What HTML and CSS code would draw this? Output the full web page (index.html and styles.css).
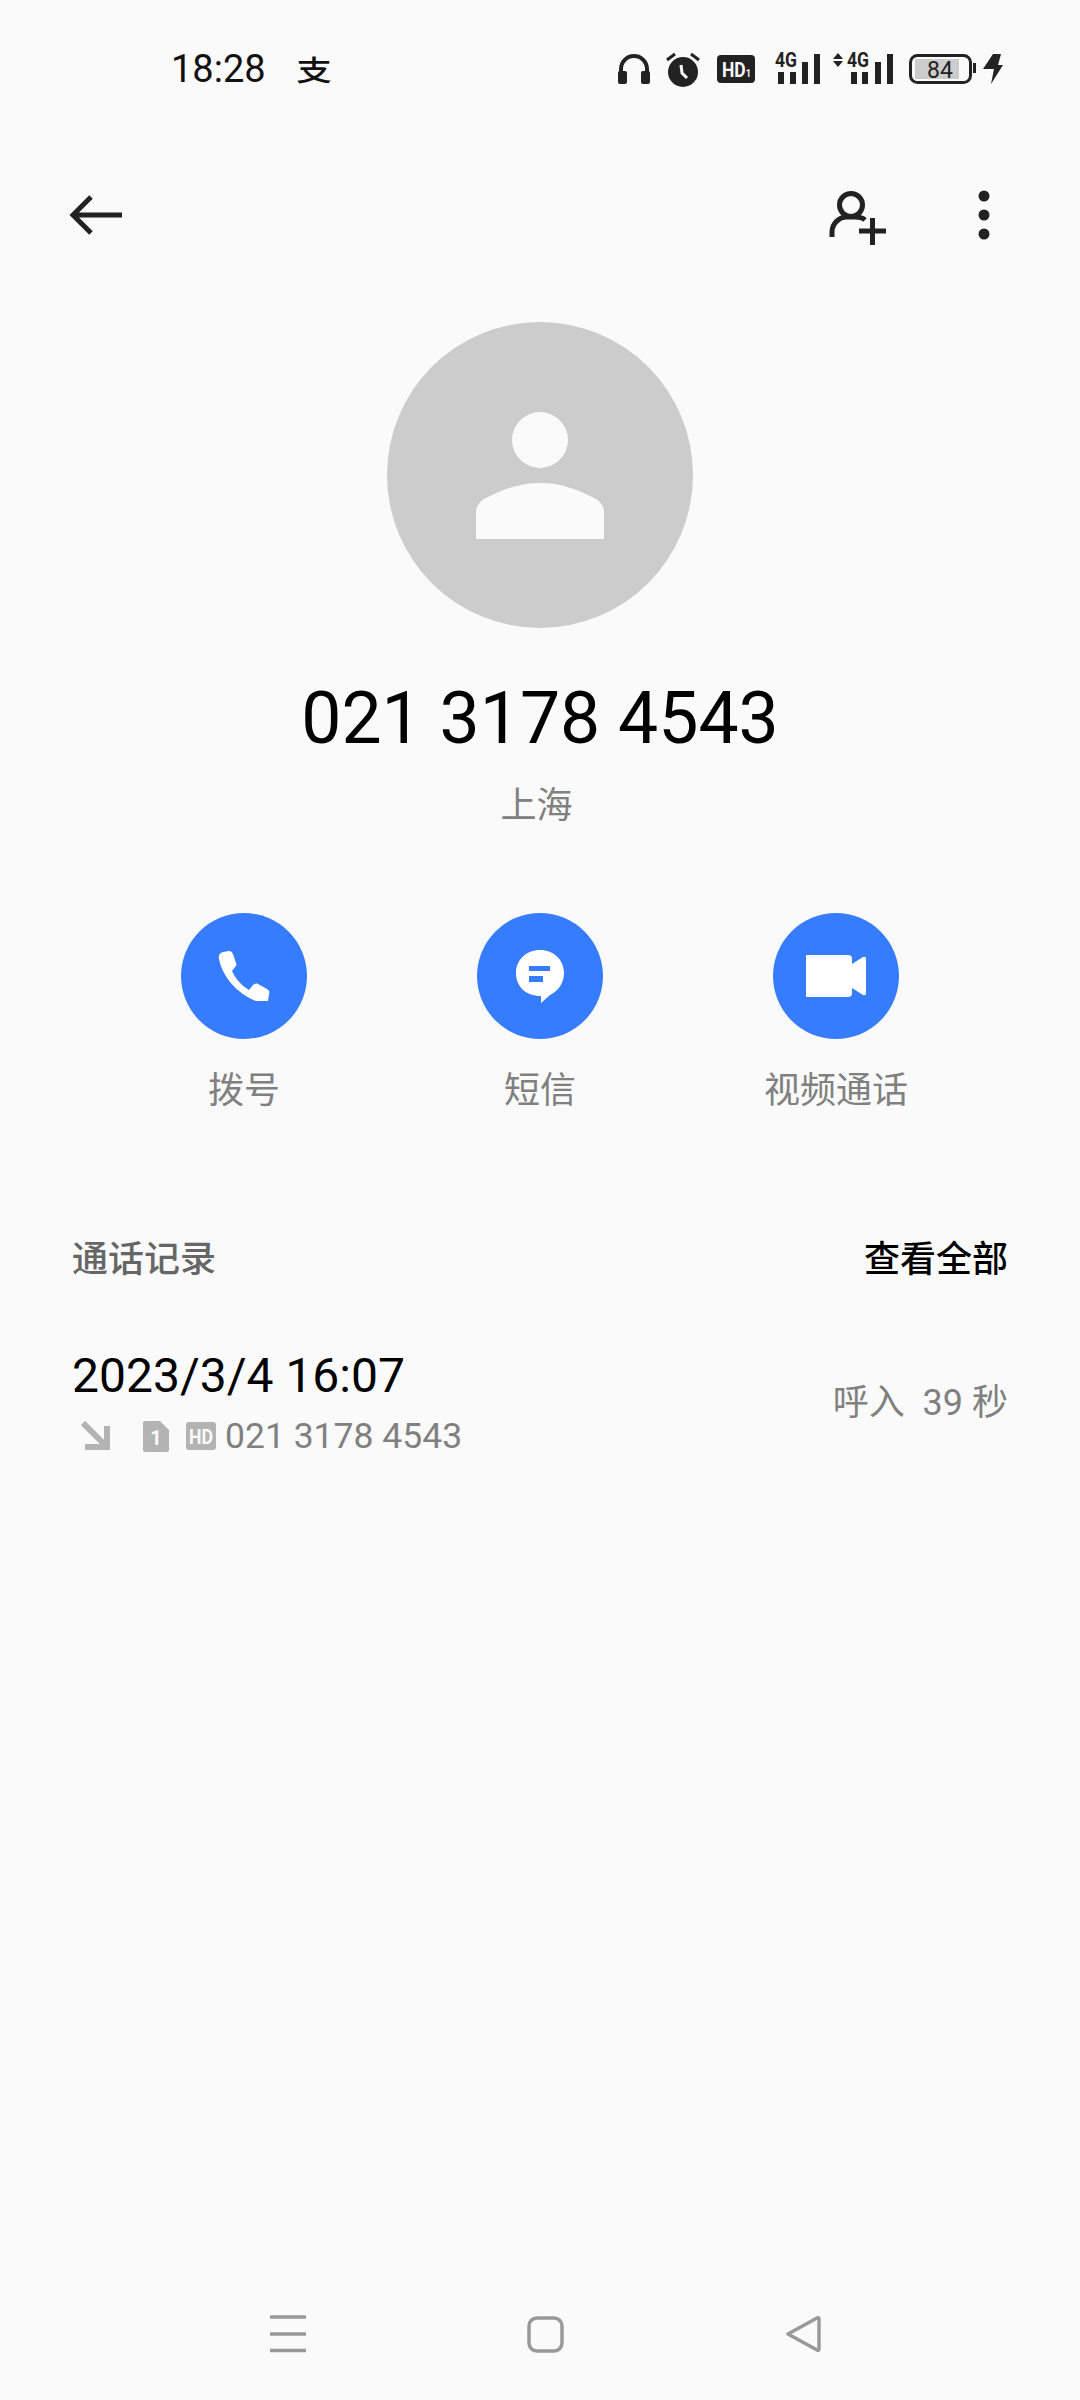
FILE: index.html
```html
<!DOCTYPE html>
<html lang="zh">
<head>
<meta charset="utf-8">
<title>通话详情</title>
<link rel="stylesheet" href="styles.css">
</head>
<body>
<div class="screen">
  <div class="status">
    <span class="time">18:28</span>
    <span class="pay">支</span>
    <div class="status-icons">
      <svg class="ic-head" width="32" height="30" viewBox="0 0 32 30"><path d="M3 26V15a13 13 0 0 1 26 0v11" fill="none" stroke="#222" stroke-width="4"/><rect x="0" y="17" width="9" height="13" rx="2" fill="#222"/><rect x="23" y="17" width="9" height="13" rx="2" fill="#222"/></svg>
      <svg class="ic-alarm" width="34" height="36" viewBox="0 0 34 36"><circle cx="17" cy="21" r="15" fill="#222"/><path d="M1 9l8-6M33 9l-8-6" stroke="#222" stroke-width="3" fill="none"/><path d="M15 14l1 8 5 5" stroke="#fafafa" stroke-width="3" fill="none"/></svg>
      <svg class="ic-hd" width="38" height="28" viewBox="0 0 38 28"><rect width="38" height="28" rx="4" fill="#222"/><text x="5" y="22" class="hd-t" textLength="29" lengthAdjust="spacingAndGlyphs">HD<tspan class="hd-s">1</tspan></text></svg>
      <svg class="ic-sig" width="46" height="38" viewBox="0 0 46 38"><text x="0" y="21" class="g4" textLength="22" lengthAdjust="spacingAndGlyphs">4G</text><rect x="3" y="26" width="6" height="12" fill="#222"/><rect x="15" y="26" width="6" height="12" fill="#222"/><rect x="27" y="16" width="6" height="22" fill="#222"/><rect x="39" y="8" width="6" height="30" fill="#222"/></svg>
      <svg class="ic-sig2" width="60" height="38" viewBox="0 0 60 38"><path d="M0 13l5-6 5 6zM0 15l5 6 5-6z" fill="#222"/><text x="14" y="21" class="g4" textLength="22" lengthAdjust="spacingAndGlyphs">4G</text><rect x="18" y="26" width="6" height="12" fill="#222"/><rect x="29" y="26" width="6" height="12" fill="#222"/><rect x="42" y="16" width="6" height="22" fill="#222"/><rect x="54" y="8" width="6" height="30" fill="#222"/></svg>
      <svg class="ic-bat" width="68" height="30" viewBox="0 0 68 30"><rect x="1.500" y="1.500" width="60" height="27" rx="7" fill="none" stroke="#222" stroke-width="3"/><rect x="6" y="5" width="44" height="20" fill="#ccc"/><rect x="64" y="9" width="3" height="10" fill="#222"/><text x="31" y="24" class="bat-t">84</text></svg>
      <svg class="ic-bolt" width="20" height="30" viewBox="0 0 20 30"><path d="M10 0h8l-3 11h5L8 30l3-15H0z" fill="#222"/></svg>
    </div>
  </div>

  <div class="topbar">
    <svg class="back" width="54" height="42" viewBox="0 0 54 42"><path d="M53 21H5M22 3L4 21l18 18" fill="none" stroke="#222" stroke-width="5"/></svg>
    <svg class="add" width="60" height="56" viewBox="0 0 60 56"><circle cx="23" cy="15" r="11.500" fill="none" stroke="#222" stroke-width="5"/><path d="M4 47V42c0-9 8-15 14-15h9c4 0 8 1 10 3" fill="none" stroke="#222" stroke-width="5"/><path d="M31 41h27M44.500 28v27" fill="none" stroke="#222" stroke-width="5"/></svg>
    <svg class="more" width="12" height="50" viewBox="0 0 12 50"><circle cx="6" cy="6" r="5.500" fill="#222"/><circle cx="6" cy="25" r="5.500" fill="#222"/><circle cx="6" cy="44" r="5.500" fill="#222"/></svg>
  </div>

  <div class="avatar">
    <svg width="128" height="127" viewBox="0 0 128 127"><circle cx="64" cy="28" r="28" fill="#fafafa"/><path d="M0 127V100C0 94 4 89 10 86 28 77 44 71 64 71s36 6 54 15c6 3 10 8 10 14v27z" fill="#fafafa"/></svg>
  </div>
  <div class="number">021 3178 4543</div>
  <div class="location">上海</div>

  <div class="actions">
    <div class="action">
      <div class="circle"><svg width="52" height="50" viewBox="0 0 52 50"><path d="M1 8C0 4 2 2 5 1l6-1c2 0 3 1 4 3l3 9c1 2 0 3-1 4l-3 4c3 7 9 14 17 19l4-5c1-1 3-2 5-1l9 5c2 1 3 3 2 5l-1 7c0 2-2 3-4 3C22 46 5 28 1 8z" fill="#fff"/></svg></div>
      <div class="label">拨号</div>
    </div>
    <div class="action">
      <div class="circle"><svg width="48" height="53" viewBox="0 0 48 53"><path d="M24 0c14 0 24 10 24 23 0 12-8 19-14 22l-9 8v-7C9 46 0 36 0 23 0 10 10 0 24 0z" fill="#fff"/><rect x="13" y="16" width="21" height="5" fill="#367cff"/><rect x="13" y="26" width="14" height="6" fill="#367cff"/></svg></div>
      <div class="label">短信</div>
    </div>
    <div class="action">
      <div class="circle"><svg width="60" height="42" viewBox="0 0 60 42"><path d="M0 0h42q4 0 4 4v5l11-7q3-1 3 2v34q0 3-3 2L46 33v5q0 4-4 4H0z" fill="#fff"/></svg></div>
      <div class="label">视频通话</div>
    </div>
  </div>

  <div class="section">
    <span class="sec-title">通话记录</span>
    <span class="sec-all">查看全部</span>
  </div>

  <div class="record">
    <div class="rec-main">
      <div class="rec-date">2023/3/4 16:07</div>
      <div class="rec-sub">
        <svg class="ic-in" width="30" height="30" viewBox="0 0 30 30"><path d="M2 2l24 24M4 26h22V5" fill="none" stroke="#b3b3b3" stroke-width="6"/></svg>
        <svg class="ic-sim" width="26" height="31" viewBox="0 0 26 31"><path d="M2 0h15l9 9v20q0 2-2 2H2q-2 0-2-2V2q0-2 2-2z" fill="#b3b3b3"/><text x="13" y="24" class="sim-t">1</text></svg>
        <svg class="ic-hd2" width="30" height="28" viewBox="0 0 30 28"><rect width="30" height="28" rx="3" fill="#b3b3b3"/><text x="3" y="22" class="hd2-t" textLength="24" lengthAdjust="spacingAndGlyphs">HD</text></svg>
        <span class="rec-num">021 3178 4543</span>
      </div>
    </div>
    <div class="rec-dur">呼入&nbsp; 39 秒</div>
  </div>

  <div class="nav">
    <svg class="nav-menu" width="36" height="38" viewBox="0 0 36 38"><path d="M0 2h36M0 19h36M0 35.500h36" stroke="#999" stroke-width="3.500" fill="none"/></svg>
    <svg class="nav-home" width="37" height="37" viewBox="0 0 37 37"><rect x="2" y="2" width="33" height="33" rx="8" fill="none" stroke="#999" stroke-width="3.500"/></svg>
    <svg class="nav-back" width="36" height="38" viewBox="0 0 36 38"><path d="M3 19L32 3q2-1 2 1v30q0 2-2 1z" fill="none" stroke="#999" stroke-width="3.500" stroke-linejoin="round"/></svg>
  </div>
</div>
</body>
</html>
```
FILE: styles.css
```css
* { box-sizing: border-box; }
html, body { margin: 0; padding: 0; }
body {
  background: #fafafa;
  font-family: Roboto, "Noto Sans CJK SC", sans-serif;
  color: #000;
}
svg { display: block; flex: none; }
.screen { width: 1080px; height: 2400px; display: flex; flex-direction: column; }

.status { height: 137px; display: flex; align-items: center; padding-left: 171px; }
.time { font-size: 38px; color: #111; width: 126px; }
.pay { font-size: 34px; font-weight: 500; color: #111; transform: scale(1.05, 0.85); }
.status-icons { display: flex; align-items: center; margin-left: auto; padding-right: 77px; }
.ic-head { margin-right: 16px; }
.ic-alarm { margin-right: 17px; }
.ic-hd { margin-right: 20px; }
.ic-sig { margin-right: 12px; margin-top: -8px; }
.ic-sig2 { margin-right: 16px; margin-top: -8px; }
.ic-bat { margin-right: 6px; }
.hd-t { font: 700 21px Roboto, sans-serif; fill: #fafafa; }
.hd-s { font-size: 11px; }
.g4 { font: 700 21px Roboto, sans-serif; fill: #222; }
.bat-t { font: 400 23px Roboto, sans-serif; fill: #222; text-anchor: middle; }

.topbar { height: 156px; display: flex; align-items: center; padding: 0 90px 0 69px; }
.back { margin-right: auto; }
.add { margin-right: 90px; margin-top: 6px; }

.avatar {
  width: 306px; height: 306px; border-radius: 50%; background: #ccc;
  margin: 29px auto 0; display: flex; align-items: center; justify-content: center;
  padding-top: 1px;
}
.number { margin-top: 49px; text-align: center; font-size: 71.5px; line-height: 84px; color: #000; }
.location { margin-top: 20px; text-align: center; font-size: 36px; line-height: 50px; color: #808080; padding-right: 7px; }

.actions { margin-top: 82px; display: flex; justify-content: center; gap: 46px; }
.action { width: 250px; display: flex; flex-direction: column; align-items: center; }
.circle { width: 126px; height: 126px; border-radius: 50%; background: #367cff; display: flex; align-items: center; justify-content: center; }
.label { margin-top: 27px; font-size: 36px; line-height: 50px; color: #808080; }

.section { margin-top: 119px; padding: 0 72px; display: flex; justify-content: space-between; font-size: 36px; line-height: 50px; font-weight: 500; }
.sec-title { color: #666; }
.sec-all { color: #000; }

.record { margin-top: 63px; padding: 0 72px; display: flex; justify-content: space-between; align-items: center; }
.rec-date { font-size: 48px; line-height: 56px; color: #000; }
.rec-sub { margin-top: 10px; height: 44px; display: flex; align-items: center; padding-left: 9px; }
.ic-in { margin-right: 32px; }
.ic-sim { margin-right: 17px; }
.ic-hd2 { margin-right: 9px; }
.rec-num { font-size: 35.5px; line-height: 44px; color: #808080; }
.hd2-t { font: 700 20px Roboto, sans-serif; fill: #fafafa; }
.sim-t { font: 700 20px Roboto, sans-serif; fill: #fafafa; text-anchor: middle; }
.rec-dur { font-size: 36px; line-height: 50px; color: #808080; }

.nav { margin-top: auto; margin-bottom: 47px; display: flex; align-items: center; padding: 0 259px 0 270px; justify-content: space-between; }
```
